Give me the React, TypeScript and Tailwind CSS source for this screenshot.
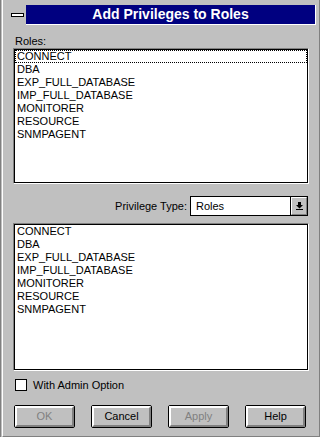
import React from 'react';

const roles = ['CONNECT', 'DBA', 'EXP_FULL_DATABASE', 'IMP_FULL_DATABASE', 'MONITORER', 'RESOURCE', 'SNMPAGENT'];

const ListBox: React.FC<{ height: string; focused?: boolean }> = ({ height, focused }) => (
  <div className={`${height} border border-[#808080] border-b-white border-r-white`}>
    <div className="h-full border border-black bg-white">
      {roles.map((r, i) => (
        <div
          key={r}
          className={`h-[13px] leading-[11px] pl-[1px] ${focused && i === 0 ? 'border border-dotted border-black' : 'border border-transparent'}`}
        >
          {r}
        </div>
      ))}
    </div>
  </div>
);

const Button: React.FC<{ label: string; disabled?: boolean }> = ({ label, disabled }) => (
  <div className="w-[61px] h-[23px] border border-black rounded-[2px] bg-[#c0c0c0]">
    <div className="h-full border-2 border-white border-r-[#808080] border-b-[#808080] flex items-center justify-center">
      <span className={disabled ? 'text-[#808080]' : 'text-black'}>{label}</span>
    </div>
  </div>
);

export default function App() {
  return (
    <div
      className="w-[320px] h-[437px] bg-[#c0c0c0] border-l border-[#808080] text-[11px] text-black"
      style={{ fontFamily: '"Liberation Sans", Arial, sans-serif' }}
    >
      <div className="h-full ml-[1px] border-l border-white border-r border-r-[#808080] border-b border-b-[#808080] flex flex-col">
        {/* title */}
        <div className="flex mt-[5px] h-[20px] pl-[5px] pr-[3px]">
          <div className="w-[18px] h-full flex items-center justify-center">
            <div className="w-[13px] h-[4px] bg-white border border-black" />
          </div>
          <div className="flex-1 bg-[#000080] border-r border-b border-white flex items-center justify-center text-white font-bold text-[14px]">
            Add Privileges to Roles
          </div>
        </div>

        <div className="px-[10px] flex flex-col">
          <div className="mt-[10px] h-[13px] leading-[13px] pl-[2px]">Roles:</div>
          <ListBox height="h-[136px]" focused />

          <div className="mt-[12px] flex items-center justify-end pr-[1px] gap-[3px]">
            <span>Privilege Type:</span>
            <div className="w-[118px] h-[20px] border border-black bg-white flex">
              <div className="flex-1 pl-[5px] leading-[18px]">Roles</div>
              <div className="w-[17px] h-full border-l border-black bg-[#c0c0c0]">
                <div className="h-full border border-white border-r-[#808080] border-b-[#808080] flex items-center justify-center">
                  <svg width="9" height="9" viewBox="0 0 9 9">
                    <path d="M3 0h3v3h2L4.5 6.5 1 3h2z" fill="black" />
                    <rect x="1" y="7" width="7" height="1" fill="black" />
                  </svg>
                </div>
              </div>
            </div>
          </div>

          <div className="mt-[7px]">
            <ListBox height="h-[148px]" />
          </div>

          <div className="mt-[8px] flex items-center gap-[6px] pl-[2px]">
            <div className="w-[12px] h-[12px] border border-black bg-white" />
            <span className="leading-[12px]">With Admin Option</span>
          </div>

          <div className="mt-[14px] flex gap-[16px] pl-[1px]">
            <Button label="OK" disabled />
            <Button label="Cancel" />
            <Button label="Apply" disabled />
            <Button label="Help" />
          </div>
        </div>
      </div>
    </div>
  );
}
